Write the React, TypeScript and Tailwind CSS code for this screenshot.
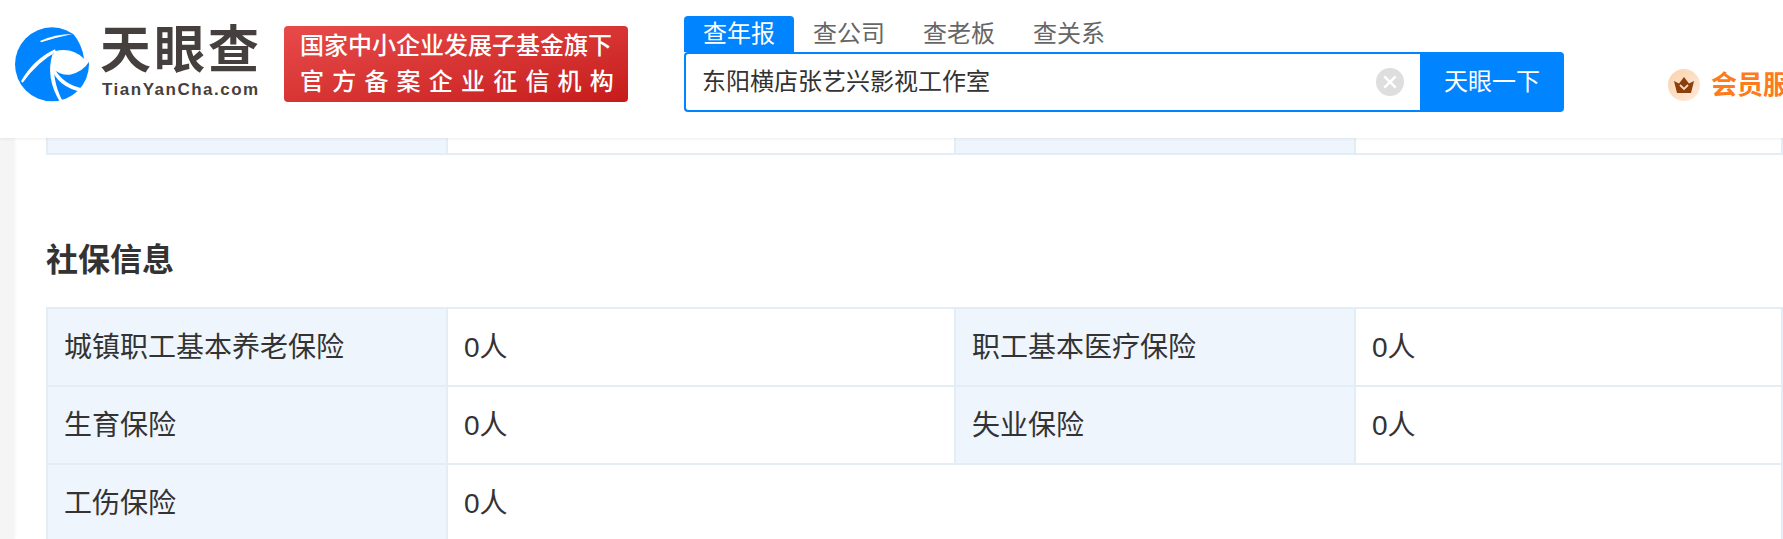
const Logo = () => (
  <svg viewBox="15 15 225 225" className="w-[75px] h-[75px] shrink-0 mt-[27px]">
    <circle cx="126" cy="127" r="111" fill="#0084ff" />
    {/* slit in the top feather */}
    <path d="M90 57 Q135 36 187 36 Q140 46 93 61 Z" fill="#fff" />
    {/* outside of the beak */}
    <path d="M186 30 Q218 70 222 110 L240 116 L245 25 Z" fill="#fff" />
    {/* eye */}
    <path d="M134 88 Q185 74 222 110 L240 115 Q220 150 180 158 Q150 160 128 140 Q124 110 134 88 Z" fill="#fff" />
    {/* three blades */}
    <path d="M33 178 Q70 112 135 82 L138 90 Q85 118 38 182 Z" fill="#fff" />
    <path d="M128 95 Q105 165 150 240 L158 238 Q122 170 136 100 Z" fill="#fff" />
    <path d="M122 132 Q140 195 216 210 L222 200 Q160 190 130 135 Z" fill="#fff" />
  </svg>
);

const Crown = () => (
  <span className="flex items-center justify-center w-8 h-8 rounded-full bg-gradient-to-br from-[#fbd2ae] to-[#ffe9d9] shrink-0">
    <svg viewBox="0 0 20 16" className="w-5 h-4">
      <path d="M0 4 L5 6.5 L10 0 L15 6.5 L20 4 L17 16 L3 16 Z" fill="#8a3e0a" />
      <path d="M6 8 L10 12 L14 8" fill="none" stroke="#f7d7bc" strokeWidth="1.8" />
    </svg>
  </span>
);

const Header = () => (
  <header className="relative z-10 flex h-[138px] shrink-0 bg-white pl-[15px] shadow-[0_1px_3px_rgba(0,0,0,0.07)]">
    <Logo />
    <div className="ml-[10px] w-[160px] shrink-0 text-[#453f3d]">
      <div className="mt-[24px] h-[54px] text-[51px] leading-[54px] font-bold tracking-[3px] whitespace-nowrap">天眼查</div>
      <div className="mt-[1px] ml-[2px] text-[17px] leading-[22px] font-bold tracking-[1.5px] whitespace-nowrap [font-family:'Liberation_Sans',sans-serif]">TianYanCha.com</div>
    </div>
    <div className="ml-[24px] mt-[26px] flex h-[76px] w-[344px] shrink-0 flex-col justify-center rounded bg-gradient-to-br from-[#e84a4a] to-[#c61a1a] pl-4 text-white">
      <div className="text-2xl leading-9 font-medium whitespace-nowrap">国家中小企业发展子基金旗下</div>
      <div className="text-2xl leading-9 font-medium tracking-[8.2px] whitespace-nowrap">官方备案企业征信机构</div>
    </div>
    <div className="ml-[56px] mt-4 w-[880px] shrink-0">
      <div className="flex h-9 text-2xl leading-9 text-[#666]">
        <div className="w-[110px] rounded-t bg-[#0084ff] text-center text-white">查年报</div>
        <div className="w-[110px] text-center">查公司</div>
        <div className="w-[110px] text-center">查老板</div>
        <div className="w-[110px] text-center">查关系</div>
      </div>
      <div className="flex h-[60px]">
        <div className="flex flex-1 items-center rounded-l border-2 border-r-0 border-[#0084ff] px-4 text-2xl text-[#333]">
          <span className="flex-1">东阳横店张艺兴影视工作室</span>
          <span className="flex h-7 w-7 items-center justify-center rounded-full bg-[#dedede]">
            <svg viewBox="0 0 14 14" className="h-4 w-4">
              <path d="M2 2 L12 12 M12 2 L2 12" stroke="#fff" strokeWidth="2.2" />
            </svg>
          </span>
        </div>
        <div className="flex w-[144px] items-center justify-center rounded-r bg-[#0084ff] text-2xl text-white">天眼一下</div>
      </div>
    </div>
    <div className="ml-[104px] mt-[69px] flex h-8 items-center gap-[11px] text-[26px] font-bold whitespace-nowrap text-[#ff7a1a]">
      <Crown />
      <span>会员服务</span>
    </div>
  </header>
);

const label = "border-r-2 border-b-2 border-[#e3edf6] bg-[#eef5fc] pl-4 pt-0.5 flex items-center";
const value = "border-r-2 border-b-2 border-[#e3edf6] bg-white pl-4 pt-0.5 flex items-center";
const gridCols = "grid grid-cols-[400px_508px_400px_1fr] border-l-2 border-[#e3edf6]";

const rows = [
  ["城镇职工基本养老保险", "0人", "职工基本医疗保险", "0人"],
  ["生育保险", "0人", "失业保险", "0人"],
];

export default function App() {
  return (
    <div className="flex h-[539px] w-[1783px] flex-col overflow-hidden bg-white [font-family:'Liberation_Sans','Noto_Sans_CJK_SC',sans-serif]">
      <Header />
      <div className="flex flex-1 overflow-hidden">
        <div className="w-[14px] shrink-0 bg-[#f5f5f5] shadow-[1px_0_3px_rgba(0,0,0,0.05)]" />
        <main className="flex-1 pl-8 text-[#333]">
          <div className={`${gridCols} h-[17px]`}>
            <div className={label} />
            <div className={value} />
            <div className={label} />
            <div className={value} />
          </div>
          <h2 className="mt-[85px] mb-[27px] text-[32px] leading-10 font-bold">社保信息</h2>
          <div className={`${gridCols} border-t-2 text-[28px] auto-rows-[78px]`}>
            {rows.map((r) =>
              r.map((text, i) => (
                <div key={r[0] + i} className={i % 2 === 0 ? label : value}>
                  {text}
                </div>
              )),
            )}
            <div className={label}>工伤保险</div>
            <div className={`${value} col-span-3`}>0人</div>
          </div>
        </main>
      </div>
    </div>
  );
}
